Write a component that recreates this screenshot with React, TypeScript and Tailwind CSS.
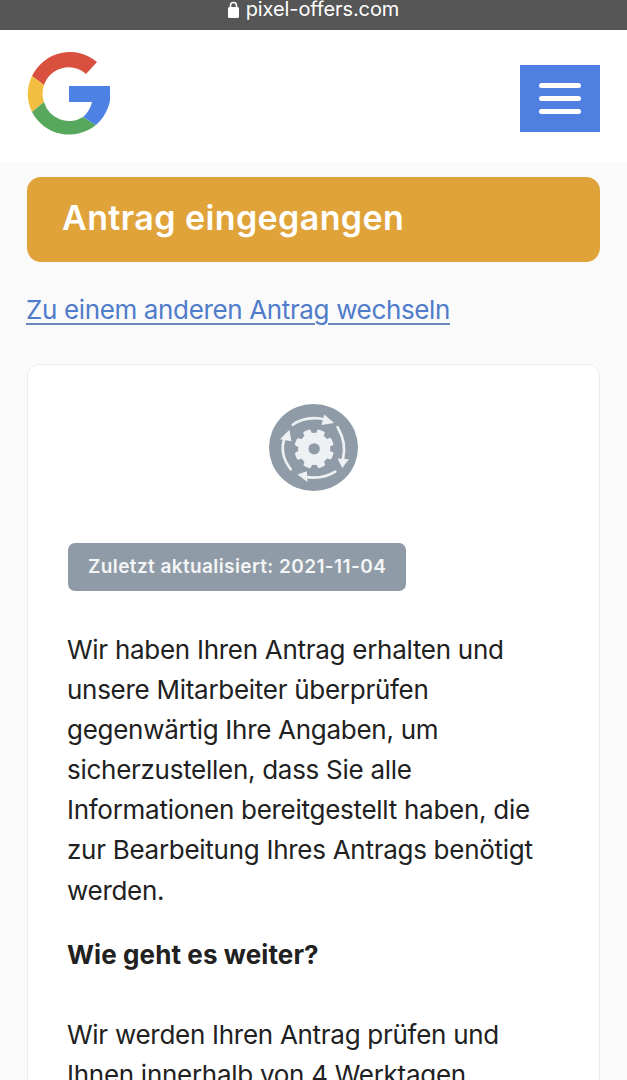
const GoogleLogo = () => (
  <svg width="83" height="85" viewBox="0 0 83 85">
    <path fill="#d9503f" d="M70 11A42 42 0 0 0 5 25L17 34A26 26 0 0 1 59 23Z" />
    <path fill="#f2be42" d="M5 25A42 42 0 0 0 5 61L17 51A26 26 0 0 1 17 34Z" />
    <path fill="#57a75c" d="M5 61A42 42 0 0 0 69 74L56 66A26 26 0 0 1 17 51Z" />
    <path fill="#4e81e4" d="M42 35H83A42 42 0 0 1 69 74L56 66Q63 60 65 51H42Z" />
  </svg>
);

const StatusIcon = () => (
  <svg width="89" height="87" viewBox="57 43 266 260">
    <ellipse cx="190" cy="173" rx="133" ry="130" fill="#8f9ba6" />
    <g fill="#eef1f4">
      <circle cx="192" cy="177" r="48" />
      {[0, 45, 90, 135, 180, 225, 270, 315].map((a) => (
        <rect key={a} x="180" y="118" width="24" height="24" rx="5" transform={`rotate(${a + 22} 192 177)`} />
      ))}
    </g>
    <circle cx="192" cy="177" r="17" fill="#8f9ba6" />
    <g fill="none" stroke="#eef1f4" strokeWidth="8" strokeLinecap="round">
      <path d="M128 105Q170 76 228 90" />
      <path d="M262 112Q290 160 278 208" />
      <path d="M255 245Q215 270 162 260" />
      <path d="M122 238Q85 190 105 142" />
    </g>
    <g fill="#eef1f4">
      <path d="M222 74L252 100L214 106Z" />
      <path d="M262 206L296 208L276 234Z" />
      <path d="M170 244L142 254L172 276Z" />
      <path d="M90 148L118 120L124 154Z" />
    </g>
  </svg>
);

const App = () => (
  <div className="h-[1080px] overflow-hidden bg-[#fafafa] font-['Inter',sans-serif] text-[#212121]">
    <div className="flex h-[30px] items-start justify-center gap-[7px] bg-[#565656] text-white">
      <svg width="11" height="17" viewBox="0 0 11 17" className="mt-[1px]">
        <rect x="0" y="6" width="11" height="11" rx="1.5" fill="#fff" />
        <path d="M2.5 7V4.5a3 3 0 0 1 6 0V7" fill="none" stroke="#fff" strokeWidth="1.6" />
      </svg>
      <span className="mt-[-4px] text-[20px] leading-[26px] tracking-[-0.1px]">pixel-offers.com</span>
    </div>

    <header className="flex h-[132px] items-start justify-between bg-white px-[27px] pt-[21px]">
      <GoogleLogo />
      <button className="mt-[14px] flex h-[67px] w-[80px] flex-col items-center justify-center gap-[8px] bg-[#4f80e1]">
        <span className="h-[5px] w-[42px] rounded-full bg-white" />
        <span className="h-[5px] w-[42px] rounded-full bg-white" />
        <span className="h-[5px] w-[42px] rounded-full bg-white" />
      </button>
    </header>

    <main className="px-[27px] pt-[15px]">
      <div className="flex h-[85px] items-center rounded-[14px] bg-[#e0a33a] pb-[3px] pl-[35px]">
        <h1 className="text-[34px] font-semibold leading-[40px] tracking-[0.4px] text-white">Antrag eingegangen</h1>
      </div>

      <a href="#" className="-ml-[1px] mt-[32px] block text-[26px] leading-[32px] tracking-[-0.36px] text-[#4f7ccb] underline underline-offset-[4px] decoration-[#6a88b8] decoration-2">
        Zu einem anderen Antrag wechseln
      </a>

      <section className="mt-[38px] h-[800px] rounded-[12px] border border-[#ececec] bg-white px-[40px] pt-[39px]">
        <div className="flex justify-center">
          <StatusIcon />
        </div>
        <div className="mt-[52px] inline-flex h-[48px] items-center rounded-[7px] bg-[#8f9ba6] px-[20px] text-[19px] font-semibold tracking-[0.4px] text-[#f4f5f6]">
          Zuletzt aktualisiert: 2021-11-04
        </div>
        <p className="-ml-[1px] mt-[39px] text-[26px] leading-[40.1px] tracking-[-0.28px]">
          Wir haben Ihren Antrag erhalten und<br />
          unsere Mitarbeiter überprüfen<br />
          gegenwärtig Ihre Angaben, um<br />
          sicherzustellen, dass Sie alle<br />
          Informationen bereitgestellt haben, die<br />
          zur Bearbeitung Ihres Antrags benötigt<br />
          werden.
        </p>
        <h2 className="-ml-[1px] mt-[24px] text-[26px] font-bold leading-[40px] tracking-[0.1px]">Wie geht es weiter?</h2>
        <p className="-ml-[1px] mt-[40px] text-[26px] leading-[40.1px] tracking-[-0.28px]">
          Wir werden Ihren Antrag prüfen und<br />
          Ihnen innerhalb von 4 Werktagen
        </p>
      </section>
    </main>
  </div>
);

export default App;
